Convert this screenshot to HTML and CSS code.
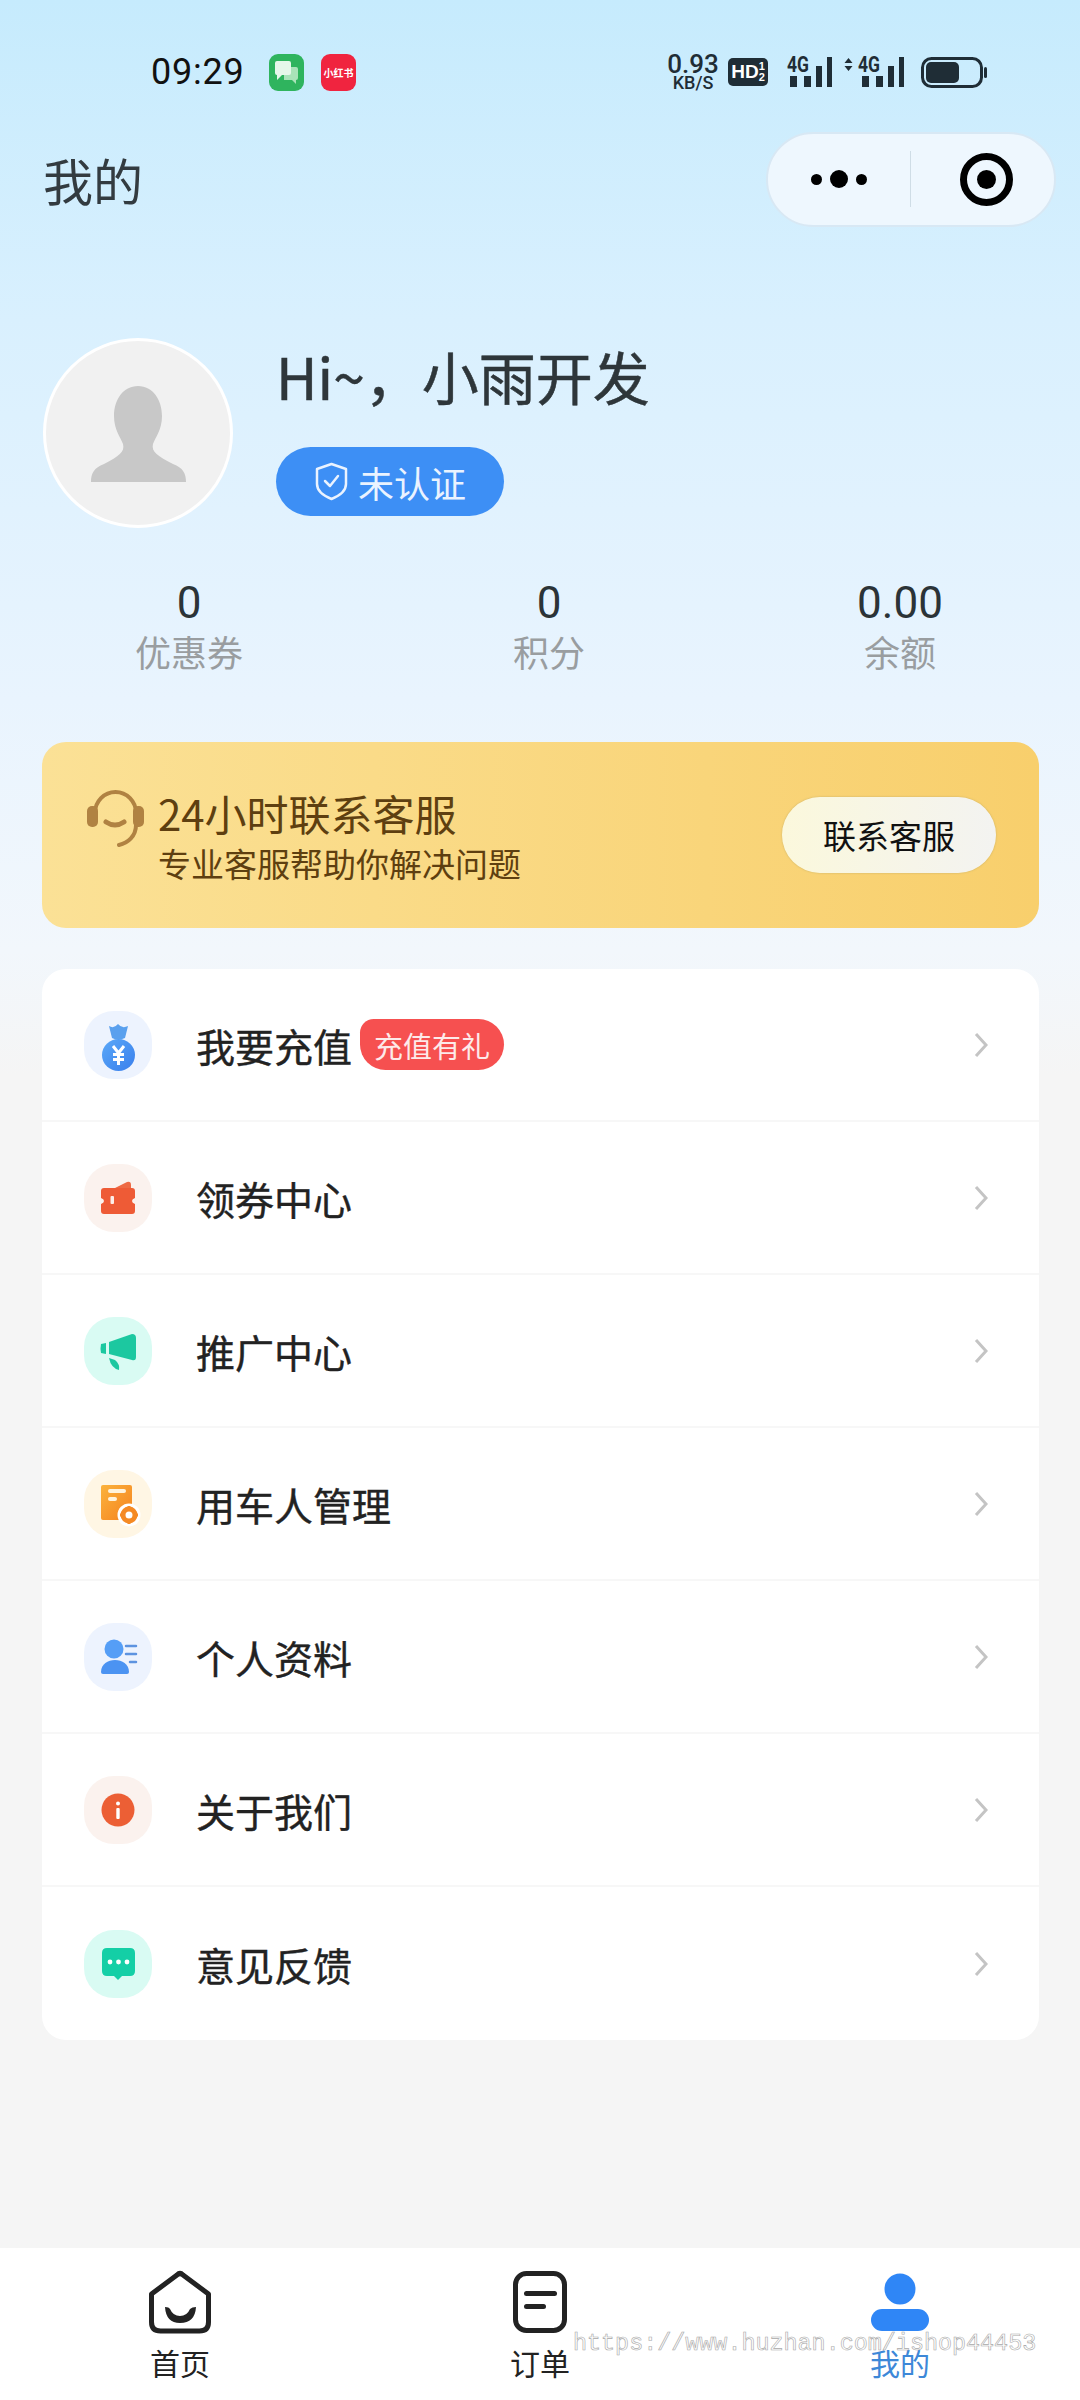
FILE: index.html
```html
<!DOCTYPE html>
<html lang="zh-CN">

<head>
  <meta charset="UTF-8">
  <meta name="viewport" content="width=device-width, initial-scale=1.0">
  <title>我的</title>
  <link rel="stylesheet" href="styles.css">
</head>

<body>
  <div class="page">
    <!-- Status bar -->
    <div class="status">
      <div class="status-left">
        <span class="time">09:29</span>
        <span class="app-icon app-green">
          <svg width="23" height="25" viewBox="0 0 23 25">
            <path d="M9 7h12a2 2 0 0 1 2 2v9a2 2 0 0 1-2 2v4l-4-4H9z" fill="#a9e3b9" />
            <path d="M2 1h12a2 2 0 0 1 2 2v10a2 2 0 0 1-2 2H7l-5 5v-5a2 2 0 0 1-2-2V3a2 2 0 0 1 2-2z" fill="#e6f7ea" />
          </svg>
        </span>
        <span class="app-icon app-red">小红书</span>
      </div>
      <div class="status-right">
        <div class="speed"><span class="speed-num">0.93</span><span class="speed-unit">KB/S</span></div>
        <div class="hd">HD<span class="hd-sub"><i>1</i><i>2</i></span></div>
        <svg class="signal" width="46" height="34" viewBox="0 0 46 34">
          <text x="1" y="17" class="signal-text" textLength="22" lengthAdjust="spacingAndGlyphs">4G</text>
          <rect x="4" y="21" width="7" height="11" />
          <rect x="18" y="21" width="7" height="11" />
          <rect x="30" y="11" width="6" height="21" />
          <rect x="41" y="2" width="5" height="30" />
        </svg>
        <svg class="signal signal-two" width="60" height="34" viewBox="0 0 60 34">
          <path d="M4.500 3l4 5h-8zM4.500 16l4-5h-8z" />
          <text x="14" y="17" class="signal-text" textLength="22" lengthAdjust="spacingAndGlyphs">4G</text>
          <rect x="18" y="21" width="7" height="11" />
          <rect x="32" y="21" width="7" height="11" />
          <rect x="44" y="11" width="6" height="21" />
          <rect x="55" y="2" width="5" height="30" />
        </svg>
        <svg class="battery" width="66" height="31" viewBox="0 0 66 31">
          <rect x="1.500" y="1.500" width="59" height="28" rx="9" fill="none" stroke="#1f2d36" stroke-width="3" />
          <rect x="5" y="5" width="33" height="21" rx="5" fill="#1f2d36" />
          <rect x="63" y="10" width="3" height="11" rx="1.500" fill="#1f2d36" />
        </svg>
      </div>
    </div>

    <!-- Title and capsule -->
    <div class="header">
      <h1 class="page-title">我的</h1>
      <div class="capsule">
        <div class="capsule-more"><i></i><b></b><i></i></div>
        <div class="capsule-target"><span></span></div>
      </div>
    </div>

    <!-- Profile -->
    <section class="profile">
      <div class="avatar">
        <svg width="184" height="184" viewBox="3 3 184 184">
          <path d="M95 48C110 48 119 62 119 78C119 92 112 100 110 106C108 114 115 118 130 126C140 130 143 135 143 144H48C48 135 51 130 61 126C76 118 82 114 80 106C78 100 71 92 71 78C71 62 80 48 95 48Z" fill="#c8c8c8" />
        </svg>
      </div>
      <div class="profile-info">
        <div class="hello">Hi~，小雨开发</div>
        <div class="verify">
          <svg width="33" height="39" viewBox="0 0 33 39" fill="none" stroke="#eaf3ff" stroke-width="2.500">
            <path d="M16.500 2L31 7V22C31 29 24 34 16.500 37C9 34 2 29 2 22V7Z" stroke-linejoin="round" />
            <path d="M10 19L15 24L23 14" stroke-linecap="round" stroke-linejoin="round" />
          </svg>
          <span>未认证</span>
        </div>
      </div>
    </section>

    <!-- Stats -->
    <section class="stats">
      <div class="stat"><div class="stat-num">0</div><div class="stat-label">优惠券</div></div>
      <div class="stat"><div class="stat-num">0</div><div class="stat-label">积分</div></div>
      <div class="stat"><div class="stat-num">0.00</div><div class="stat-label">余额</div></div>
    </section>

    <!-- Service banner -->
    <section class="service">
      <svg class="service-icon" width="60" height="58" viewBox="0 0 60 58" fill="none" stroke="#b08242" stroke-width="4" stroke-linecap="round">
        <path d="M9 24A20.500 21 0 0 1 50 24" />
        <path d="M50 36C50 47 42 54 33 56" />
        <path d="M20 33Q29 39 38 33" stroke-width="5" />
        <rect x="1" y="17" width="11" height="21" rx="5" fill="#b08242" stroke="none" />
        <rect x="47" y="17" width="11" height="21" rx="5" fill="#b08242" stroke="none" />
      </svg>
      <div class="service-text">
        <div class="service-title">24小时联系客服</div>
        <div class="service-sub">专业客服帮助你解决问题</div>
      </div>
      <div class="service-btn">联系客服</div>
    </section>

    <!-- Menu -->
    <ul class="menu">
      <li class="menu-row">
        <span class="blob blob-blue">
          <svg width="68" height="68" viewBox="0 0 68 68">
            <defs>
              <linearGradient id="gBlue" x1="0" y1="0" x2="1" y2="1">
                <stop offset="0" stop-color="#5aa8f8" />
                <stop offset="1" stop-color="#3a7fec" />
              </linearGradient>
            </defs>
            <path d="M25 15Q30 18 34 13Q38 18 44 15L41 27Q34 30 28 27Z" fill="#5aa0ee" />
            <ellipse cx="34.500" cy="44" rx="16.500" ry="16" fill="url(#gBlue)" />
            <path d="M29 35L34.500 42L40 35M34.500 42V54M29 43.500H40M29 48.500H40" fill="none" stroke="#fff" stroke-width="3" />
          </svg>
        </span>
        <span class="menu-text">我要充值</span>
        <span class="tag">充值有礼</span>
        <svg class="chevron" width="14" height="26" viewBox="0 0 14 26"><path d="M2 2L12 13L2 24" /></svg>
      </li>
      <li class="menu-row">
        <span class="blob blob-peach">
          <svg width="68" height="68" viewBox="0 0 68 68">
            <path d="M29 25L43 18Q47 17 47 21V25Z" fill="#ee6a44" />
            <path d="M20 24H48Q51 24 51 27V34Q48 35 48 37Q48 39 51 40V47Q51 50 48 50H20Q17 50 17 47V40Q20 39 20 37Q20 35 17 34V27Q17 24 20 24Z" fill="#ee5b36" />
            <rect x="26.500" y="32" width="3.500" height="8" rx="1" fill="#fdeee8" />
          </svg>
        </span>
        <span class="menu-text">领券中心</span>
        <svg class="chevron" width="14" height="26" viewBox="0 0 14 26"><path d="M2 2L12 13L2 24" /></svg>
      </li>
      <li class="menu-row">
        <span class="blob blob-mint">
          <svg width="68" height="68" viewBox="0 0 68 68">
            <path d="M25 25L48 17Q52 17 52 21V40Q52 44 48 43L25 37Z" fill="#1cc8a0" />
            <path d="M17 27L22 26V37L17 36Q16 32 17 27Z" fill="#1cc8a0" />
            <path d="M25 41L31 43Q36 47 35 53Q27 51 25 41Z" fill="#1cc8a0" />
          </svg>
        </span>
        <span class="menu-text">推广中心</span>
        <svg class="chevron" width="14" height="26" viewBox="0 0 14 26"><path d="M2 2L12 13L2 24" /></svg>
      </li>
      <li class="menu-row">
        <span class="blob blob-cream">
          <svg width="68" height="68" viewBox="0 0 68 68">
            <defs>
              <linearGradient id="gOrange" x1="0" y1="0" x2="1" y2="1">
                <stop offset="0" stop-color="#fbb23c" />
                <stop offset="1" stop-color="#f5831f" />
              </linearGradient>
            </defs>
            <rect x="17" y="15" width="31" height="35" rx="2" fill="url(#gOrange)" />
            <rect x="24" y="19" width="18" height="4" rx="2" fill="#fff3dc" />
            <rect x="24" y="27" width="9" height="4" rx="2" fill="#fff3dc" />
            <circle cx="45" cy="45" r="11.500" fill="#fff" />
            <circle cx="45" cy="45" r="6" fill="none" stroke="#f58a24" stroke-width="5" />
            <path d="M45 36V39M45 51V54M36 45H39M51 45H54" stroke="#f58a24" stroke-width="3" />
          </svg>
        </span>
        <span class="menu-text">用车人管理</span>
        <svg class="chevron" width="14" height="26" viewBox="0 0 14 26"><path d="M2 2L12 13L2 24" /></svg>
      </li>
      <li class="menu-row">
        <span class="blob blob-blue">
          <svg width="68" height="68" viewBox="0 0 68 68">
            <circle cx="30" cy="26" r="9.500" fill="#559ef6" />
            <path d="M17 49C17 41 24 37 31 37C38 37 45 41 45 49Q45 51 43 51H19Q17 51 17 49Z" fill="#4b93f2" />
            <path d="M42 23H52M42 31H52M46 39H52" stroke="#5d93e0" stroke-width="2.500" stroke-linecap="round" />
          </svg>
        </span>
        <span class="menu-text">个人资料</span>
        <svg class="chevron" width="14" height="26" viewBox="0 0 14 26"><path d="M2 2L12 13L2 24" /></svg>
      </li>
      <li class="menu-row">
        <span class="blob blob-peach">
          <svg width="68" height="68" viewBox="0 0 68 68">
            <circle cx="34" cy="34" r="16.500" fill="#ec5f35" />
            <rect x="32.300" y="32" width="3.400" height="11" rx="1" fill="#fff" />
            <circle cx="34" cy="27.500" r="2" fill="#fff" />
          </svg>
        </span>
        <span class="menu-text">关于我们</span>
        <svg class="chevron" width="14" height="26" viewBox="0 0 14 26"><path d="M2 2L12 13L2 24" /></svg>
      </li>
      <li class="menu-row">
        <span class="blob blob-mint">
          <svg width="68" height="68" viewBox="0 0 68 68">
            <path d="M23 18H46Q51 18 51 23V41Q51 46 46 46H38L34 50L30 46H23Q18 46 18 41V23Q18 18 23 18Z" fill="#14cfa6" />
            <circle cx="26" cy="32" r="2.400" fill="#fff" />
            <circle cx="34.500" cy="32" r="2.400" fill="#fff" />
            <circle cx="43" cy="32" r="2.400" fill="#fff" />
          </svg>
        </span>
        <span class="menu-text">意见反馈</span>
        <svg class="chevron" width="14" height="26" viewBox="0 0 14 26"><path d="M2 2L12 13L2 24" /></svg>
      </li>
    </ul>

    <!-- Tab bar -->
    <nav class="tabbar">
      <div class="tab">
        <svg width="64" height="64" viewBox="0 0 64 64">
          <path d="M29 5Q32 2 35 5L60.500 24V52Q60.500 61 51.500 61H12.500Q3.500 61 3.500 52V24Z" fill="none" stroke="#222" stroke-width="5" stroke-linejoin="round" />
          <path d="M17 37Q21 37 22 39Q25 46 32 46Q39 46 42 39Q44 37 48 37Q47 53 32 53Q18 53 17 37Z" fill="#222" />
        </svg>
        <span>首页</span>
      </div>
      <div class="tab">
        <svg width="64" height="64" viewBox="0 0 64 64">
          <rect x="7.500" y="3.500" width="49" height="57" rx="11" fill="none" stroke="#222" stroke-width="5" />
          <rect x="16" y="21" width="33" height="5" rx="2.500" fill="#222" />
          <rect x="16" y="34" width="22" height="5" rx="2.500" fill="#222" />
        </svg>
        <span>订单</span>
      </div>
      <div class="tab tab-active">
        <svg width="64" height="64" viewBox="0 0 64 64">
          <ellipse cx="32" cy="19" rx="15.500" ry="15.500" fill="#2f86f6" />
          <rect x="3" y="39" width="58" height="22" rx="11" fill="#2f86f6" />
        </svg>
        <span>我的</span>
      </div>
    </nav>

    <div class="watermark">https://www.huzhan.com/ishop44453</div>
  </div>
</body>

</html>
```

FILE: styles.css
```css
* {
  margin: 0;
  padding: 0;
  box-sizing: border-box;
}

body {
  width: 1080px;
  height: 2400px;
  font-family: "Noto Sans CJK SC", "Noto Sans", sans-serif;
  color: #222;
}

.page {
  position: relative;
  display: flex;
  flex-direction: column;
  width: 1080px;
  height: 2400px;
  overflow: hidden;
  background: linear-gradient(180deg, #c6ebfd 0, #d9f0fe 320px, #e9f4fe 700px, #f2f7fc 950px, #f5f5f5 1075px);
}

/* Status bar */
.status {
  display: flex;
  justify-content: space-between;
  align-items: center;
  height: 132px;
  padding: 12px 93px 0 151px;
}

.status-left,
.status-right {
  display: flex;
  align-items: center;
}

.time {
  width: 118px;
  font-family: Roboto, sans-serif;
  font-size: 36px;
  letter-spacing: 0.8px;
  color: #111;
}

.app-icon {
  display: flex;
  align-items: center;
  justify-content: center;
  width: 35px;
  height: 37px;
  margin-right: 17px;
  border-radius: 9px;
}

.app-green {
  background: #2fb45e;
}

.app-red {
  margin-right: 0;
  background: #f0243f;
  color: #fff;
  font-size: 10px;
  font-weight: 700;
  white-space: nowrap;
}

.speed {
  display: flex;
  flex-direction: column;
  align-items: center;
  width: 50px;
  margin-right: 10px;
  font-family: Roboto, sans-serif;
  color: #1f2d36;
}

.speed-num {
  font-size: 26px;
  font-weight: 500;
  line-height: 21px;
}

.speed-unit {
  font-size: 18px;
  font-weight: 500;
  line-height: 15px;
}

.hd {
  display: flex;
  align-items: center;
  justify-content: center;
  width: 40px;
  height: 28px;
  margin-right: 18px;
  border-radius: 5px;
  background: #1f2d36;
  color: #fff;
  font-family: "Liberation Sans", sans-serif;
  font-size: 19px;
  font-weight: 700;
}

.hd-sub {
  display: flex;
  flex-direction: column;
  font-size: 11px;
  font-style: normal;
  line-height: 11px;
}

.hd-sub i {
  font-style: normal;
}

.signal {
  margin-right: 12px;
  overflow: visible;
  fill: #1f2d36;
}

.signal-two {
  margin-right: 17px;
}

.signal-text {
  font-family: Roboto, sans-serif;
  font-size: 22px;
  font-weight: 700;
}

/* Header */
.header {
  display: flex;
  justify-content: space-between;
  align-items: center;
  height: 94px;
  padding: 0 24px 0 43px;
}

.page-title {
  font-size: 50px;
  font-weight: 400;
  color: #333b40;
}

.capsule {
  display: flex;
  align-items: center;
  width: 290px;
  height: 95px;
  border: 2px solid #d8e8f4;
  border-radius: 48px;
  background: #eef7fe;
}

.capsule-more {
  display: flex;
  align-items: center;
  justify-content: center;
  gap: 8px;
  width: 143px;
  height: 56px;
  border-right: 1px solid #cfdde6;
}

.capsule-more i {
  width: 11px;
  height: 11px;
  border-radius: 50%;
  background: #000;
}

.capsule-more b {
  width: 18px;
  height: 18px;
  border-radius: 50%;
  background: #000;
}

.capsule-target {
  display: flex;
  align-items: center;
  justify-content: center;
  width: 53px;
  height: 53px;
  margin-left: 49px;
  border: 7px solid #000;
  border-radius: 50%;
}

.capsule-target span {
  width: 19px;
  height: 19px;
  border-radius: 50%;
  background: #000;
}

/* Profile */
.profile {
  display: flex;
  margin-top: 112px;
  padding-left: 43px;
}

.avatar {
  display: flex;
  align-items: center;
  justify-content: center;
  width: 190px;
  height: 190px;
  border: 3px solid #fff;
  border-radius: 50%;
  background: #f1f1f1;
}

.profile-info {
  margin-left: 43px;
  padding-top: 2px;
}

.hello {
  height: 70px;
  font-size: 57px;
  line-height: 70px;
  color: #2e363a;
  -webkit-text-stroke: 0.5px #2e363a;
}

.verify {
  display: flex;
  align-items: center;
  gap: 10px;
  width: 228px;
  height: 69px;
  margin-top: 37px;
  padding-left: 39px;
  border-radius: 35px;
  background: #3d8ff5;
  color: #eaf3ff;
  font-size: 36px;
}

/* Stats */
.stats {
  display: grid;
  grid-template-columns: 360px 360px 342px;
  margin-top: 50px;
  padding-left: 9px;
  text-align: center;
}

.stat-num {
  font-family: Roboto, sans-serif;
  font-size: 44px;
  line-height: 50px;
  color: #2b3337;
}

.stat-label {
  margin-top: -1px;
  font-size: 36px;
  line-height: 48px;
  color: #999da0;
}

/* Service banner */
.service {
  display: flex;
  flex-shrink: 0;
  align-items: flex-start;
  height: 186px;
  margin: 67px 41px 0 42px;
  padding: 46px 43px 0 44px;
  border-radius: 24px;
  background: linear-gradient(90deg, #fbe196, #f8cf6c);
}

.service-icon {
  margin-top: 1px;
}

.service-text {
  margin-left: 12px;
  color: #5e3f10;
}

.service-title {
  font-size: 42px;
  line-height: 50px;
}

.service-sub {
  margin-top: 2px;
  font-size: 33px;
  line-height: 46px;
}

.service-btn {
  display: flex;
  align-items: center;
  justify-content: center;
  width: 214px;
  height: 76px;
  margin-top: 9px;
  margin-left: auto;
  border-radius: 38px;
  background: linear-gradient(90deg, #fbf8dc, #f3f3f1);
  box-shadow: 0 0 2px rgba(120, 120, 90, 0.4);
  color: #111;
  font-size: 33px;
}

/* Menu */
.menu {
  flex-shrink: 0;
  margin: 41px 41px 0 42px;
  border-radius: 24px;
  background: #fff;
  list-style: none;
}

.menu-row {
  display: flex;
  align-items: center;
  height: 153px;
  padding: 0 51px 0 42px;
  border-bottom: 2px solid #f7f7f7;
}

.menu-row:last-child {
  border-bottom: none;
}

.blob {
  flex-shrink: 0;
  width: 68px;
  height: 68px;
  margin-right: 44px;
  border-radius: 44%;
}

.blob svg {
  display: block;
}

.blob-blue {
  background: #edf3fe;
}

.blob-peach {
  background: #fbf2ee;
}

.blob-mint {
  background: #d9fbf3;
}

.blob-cream {
  background: #fff6e4;
}

.menu-text {
  font-size: 39px;
  line-height: 50px;
  color: #222;
  -webkit-text-stroke: 0.4px #222;
}

.tag {
  display: flex;
  align-items: center;
  justify-content: center;
  width: 144px;
  height: 51px;
  margin-left: 8px;
  border-radius: 14px 26px 26px 26px;
  background: #f65050;
  color: #fdeaea;
  font-size: 29px;
}

.chevron {
  flex-shrink: 0;
  margin-left: auto;
  fill: none;
  stroke: #c4c4c4;
  stroke-width: 3;
}

/* Tab bar */
.tabbar {
  display: grid;
  grid-template-columns: repeat(3, 360px);
  height: 152px;
  margin-top: auto;
  background: #fff;
}

.tab {
  display: flex;
  flex-direction: column;
  align-items: center;
  padding-top: 22px;
  font-size: 30px;
  line-height: 36px;
  color: #222;
}

.tab svg {
  margin-bottom: 10px;
}

.tab-active {
  color: #3d88d8;
}

/* Site watermark on top of the tab bar */
.watermark {
  position: absolute;
  top: 2329px;
  left: 573px;
  font-family: "Liberation Mono", monospace;
  font-size: 23.400px;
  line-height: 30px;
  white-space: nowrap;
  color: #fff;
  -webkit-text-stroke: 0.6px #a8a8a8;
}
```
